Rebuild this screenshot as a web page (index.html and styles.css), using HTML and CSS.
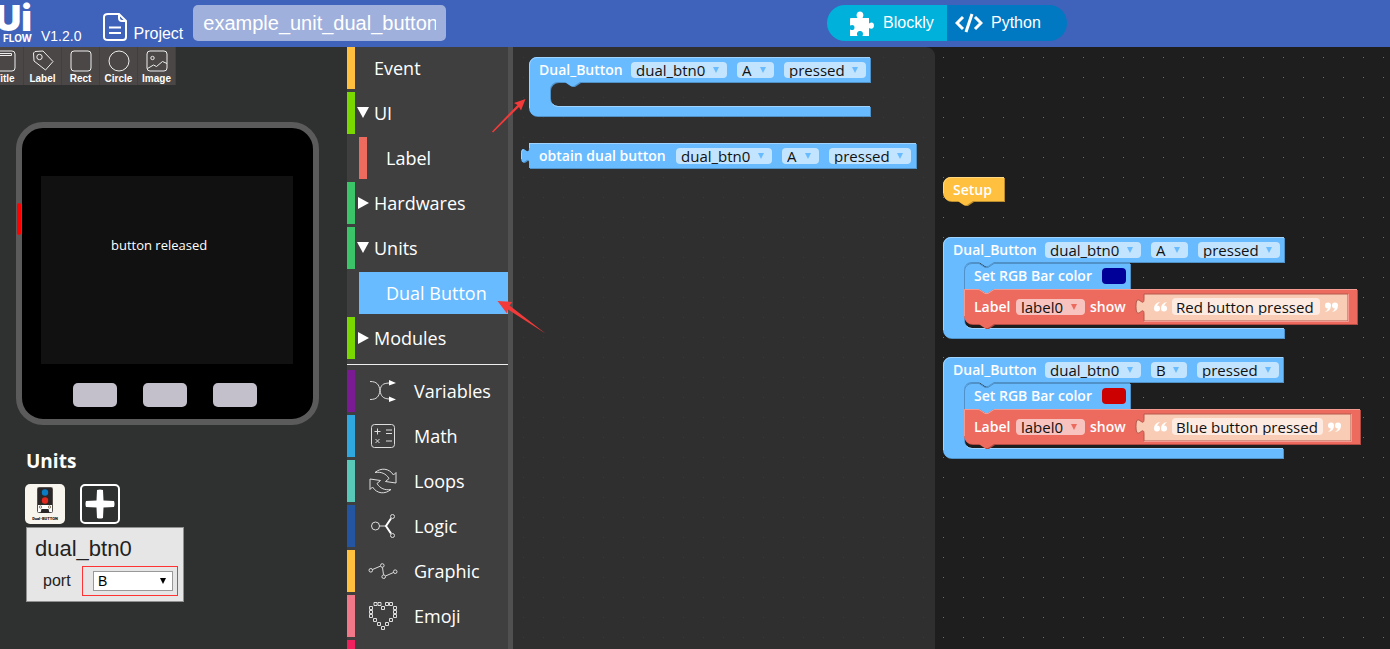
FILE: index.html
```html
<!DOCTYPE html>
<html lang="en">
<head>
<meta charset="utf-8">
<title>UiFlow</title>
<link rel="stylesheet" href="styles.css">
</head>
<body>
<header class="topbar">
  <div class="logo"><span class="logo-main">Ui</span><span class="logo-sub">FLOW</span></div>
  <span class="version">V1.2.0</span>
  <button class="project">
    <svg class="project-icon" viewBox="0 0 24 28"><path d="M5 1h11l7 7v16q0 3-3 3H5q-4 0-4-3V4q0-3 4-3zM16 1v4q0 3 3 3h4M6 14.500h12M6 20h12"/></svg>
    <span>Project</span>
  </button>
  <input class="project-name" aria-label="Project name" value="example_unit_dual_button">
  <div class="mode">
    <button class="mode-btn mode-blockly">
      <svg class="puzzle" viewBox="0 0 25 25"><path d="M2 7h6.500c-2-3-.5-6.500 2.500-6.500s4.500 3.500 2.500 6.500H20v5.500c3-2 5-.5 5 2s-2 4.500-5 2.500V25h-6.500c1.500-3.500-.5-5-2.500-5s-4 1.500-2.500 5H1v-6.500c3 1.500 4.500 0 4.500-2S4 13 1 14.500V8q0-1 1-1z"/></svg>
      Blockly
    </button>
    <button class="mode-btn mode-python">
      <svg class="code" viewBox="0 0 28 22"><path d="M8 5 2 11l6 6M20 5l6 6-6 6M17 2l-6 18"/></svg>
      Python
    </button>
  </div>
</header>

<main class="layout">
  <aside class="side">
    <div class="tools">
      <button class="tool"><svg viewBox="0 0 22 22"><rect x="1" y="1" width="20" height="20" rx="3"/><path d="M3.500 3.500h14v2h-14z"/></svg>Title</button>
      <button class="tool"><svg viewBox="0 0 22 22"><path d="M3 1.500 11 1l10 10.500-7.500 8.500L2 11l-.5-8z"/><circle cx="7.500" cy="7" r="2.700"/></svg>Label</button>
      <button class="tool"><svg viewBox="0 0 22 22"><rect x="1" y="1" width="20" height="20" rx="3"/></svg>Rect</button>
      <button class="tool"><svg viewBox="0 0 22 22"><circle cx="11" cy="11" r="10"/></svg>Circle</button>
      <button class="tool"><svg viewBox="0 0 22 22"><rect x="1" y="1" width="20" height="20" rx="3"/><circle cx="6.500" cy="8" r="1.700"/><path d="m1.500 18.500 6-3.500 3 1.500 6-5 4.500 2"/></svg>Image</button>
    </div>
    <div class="device">
      <span class="device-power"></span>
      <div class="screen"><span class="screen-label">button released</span></div>
      <div class="device-keys">
        <button class="key" aria-label="Key A"></button>
        <button class="key" aria-label="Key B"></button>
        <button class="key" aria-label="Key C"></button>
      </div>
    </div>
    <section class="units">
      <h2 class="units-title">Units</h2>
      <div class="unit-list">
        <button class="unit" aria-label="Dual button unit">
          <svg viewBox="0 0 40 40">
            <rect width="40" height="40" rx="5" fill="#f8f5ee"/>
            <rect x="12.500" y="3.500" width="15" height="25" rx="1" fill="#fff" stroke="#55504c"/>
            <rect x="13" y="4" width="14" height="17" fill="#2b2627"/>
            <circle cx="20" cy="8.500" r="3.200" fill="#0a7cc4"/><circle cx="20" cy="16.500" r="3.200" fill="#e02a20"/>
            <circle cx="15.500" cy="23" r="1.200" fill="none" stroke="#8b7c65"/><circle cx="24.500" cy="23" r="1.200" fill="none" stroke="#8b7c65"/>
            <path d="M16.500 25h7l1 4h-9z" fill="#2b2627"/>
            <text x="20" y="36" class="unit-caption">Dual-BUTTON</text>
          </svg>
        </button>
        <button class="unit" aria-label="Add unit">
          <svg viewBox="0 0 40 40"><rect x="1" y="1" width="38" height="38" rx="4" fill="none" stroke="#fff" stroke-width="2"/><path d="M17 6q3-1 6 0l.5 10.500L34 17q1 3 0 6l-10.500.5L23 34q-3 1-6 0l-.5-10.500L6 23q-1-3 0-6l10.500-.5z" fill="#fff"/></svg>
        </button>
      </div>
      <div class="unit-card">
        <div class="unit-name">dual_btn0</div>
        <div class="port-row">
          <label for="port">port</label>
          <div class="port-frame"><select id="port" class="port"><option>B</option></select></div>
        </div>
      </div>
    </section>
  </aside>

  <nav class="toolbox">
    <button class="cat c-yellow"><span class="caret"></span>Event</button>
    <button class="cat c-lime"><svg class="caret" viewBox="0 0 12 12"><path d="M0 0h12L6 11z"/></svg>UI</button>
    <button class="cat sub c-coral">Label</button>
    <button class="cat c-green"><svg class="caret" viewBox="0 0 12 12"><path d="M1 0v12l11-6z"/></svg>Hardwares</button>
    <button class="cat c-green"><svg class="caret" viewBox="0 0 12 12"><path d="M0 0h12L6 11z"/></svg>Units</button>
    <button class="cat sub selected">Dual Button</button>
    <button class="cat c-lime"><svg class="caret" viewBox="0 0 12 12"><path d="M1 0v12l11-6z"/></svg>Modules</button>
    <hr class="cat-line">
    <button class="cat pic c-purple"><svg viewBox="0 0 30 30"><path d="M2 5.500c7 0 9 3 10 9s3 8 9 8.500M2 23.500c7 0 9-3 10-9s3-7 9-7.500"/><path class="solid" d="m21 4 7 3-7 2.500zM21 20.500l7 3-7 2.500z"/></svg>Variables</button>
    <button class="cat pic c-sky"><svg viewBox="0 0 30 30"><rect x="3.500" y="3.500" width="23" height="23" rx="3"/><path d="M6.500 10.500h6M9.500 7.500v6M18 9h6M18 12.500h6M7.500 18l4 4M11.500 18l-4 4M18 20h6"/></svg>Math</button>
    <button class="cat pic c-teal"><svg viewBox="0 0 30 30"><path d="M7 6.500C13 1.500 21 2 25.500 9L28 6.500V17l-10.500-1.500L21 12.500C18 7.500 13 5.500 7 6.500zM23 23.500C17 28.500 9 28 4.500 21L2 23.500V13l10.500 1.500L9 17.500c3 5 8 7 14 6z"/></svg>Loops</button>
    <button class="cat pic c-navy"><svg viewBox="0 0 30 30"><circle cx="7.500" cy="15" r="4"/><path d="M11.500 15H18"/><path class="thick" d="m23 7.500-5 7.500 5 7.500"/><circle cx="24.500" cy="5.500" r="2"/><circle cx="24.500" cy="24.500" r="2"/></svg>Logic</button>
    <button class="cat pic c-yellow"><svg viewBox="0 0 30 30"><circle cx="2.800" cy="14.300" r="1.800"/><circle cx="14.300" cy="9.500" r="1.800"/><circle cx="15.700" cy="20.700" r="1.800"/><circle cx="27.200" cy="15.700" r="1.800"/><path d="m4.500 13.500 8-3.400M14.500 11.500l1 7.300M17.500 20l8-3.500"/></svg>Graphic</button>
    <button class="cat pic c-pink"><svg viewBox="0 0 30 30"><path d="M6 1.500h3v3H6zM10 1.500h3v3h-3zM13.500 5.500h3v3h-3zM17.500 1.500h3v3h-3zM21.500 1.500h3v3h-3zM25.500 5.500h3v3h-3zM25.500 9.500h3v3h-3zM25.500 13.500h3v3h-3zM21.500 17.500h3v3h-3zM17.500 21.500h3v3h-3zM13.500 25.500h3v3h-3zM9.500 21.500h3v3h-3zM5.500 17.500h3v3h-3zM1.500 13.500h3v3h-3zM1.500 9.500h3v3h-3zM1.500 5.500h3v3h-3z"/></svg>Emoji</button>
    <button class="cat c-crimson" aria-label="More"></button>
  </nav>

  <section class="workspace">
    <div class="flyout"></div>

    <div class="block blue at-event">
      <svg class="shape">
        <path class="dark" transform="translate(1 1)" d="M0 8A8 8 0 0 1 8 0H341V25H51l-6 4h-3l-6-4h-7a8 8 0 0 0-8 8v8a8 8 0 0 0 8 8H341V59H8a8 8 0 0 1-8-8z"/>
        <path class="fill" d="M0 8A8 8 0 0 1 8 0H341V25H51l-6 4h-3l-6-4h-7a8 8 0 0 0-8 8v8a8 8 0 0 0 8 8H341V59H8a8 8 0 0 1-8-8z"/>
        <path class="light" d="M.5 51V8A7.500 7.500 0 0 1 8 .5H341M23.500 47q2 2.500 5.500 2.500H341"/></svg>
      <div class="row"><span class="txt w-event">Dual_Button</span>
        <select class="field w-name" aria-label="Unit"><option>dual_btn0</option></select>
        <select class="field w-key" aria-label="Button"><option>A</option></select>
        <select class="field w-state" aria-label="State"><option>pressed</option></select></div>
    </div>

    <div class="block blue at-value">
      <svg class="shape">
        <path class="dark" transform="translate(1 1)" d="M0 0H387V25H0V20c0-10-8 8-8-7.500S0 15 0 5z"/>
        <path class="fill" d="M0 0H387V25H0V20c0-10-8 8-8-7.500S0 15 0 5z"/>
        <path class="light" d="M0 .5H387M.5 0v5M-7.500 16v-6.500q0-3 2-2.500"/></svg>
      <div class="row"><span class="txt w-obtain">obtain dual button</span>
        <select class="field w-name" aria-label="Unit"><option>dual_btn0</option></select>
        <select class="field w-key" aria-label="Button"><option>A</option></select>
        <select class="field w-state" aria-label="State"><option>pressed</option></select></div>
    </div>

    <div class="block yellow at-setup">
      <svg class="shape">
        <path class="dark" transform="translate(1 1)" d="M0 8A8 8 0 0 1 8 0H61V24H30l-6 4h-3l-6-4H8a8 8 0 0 1-8-8z"/>
        <path class="fill" d="M0 8A8 8 0 0 1 8 0H61V24H30l-6 4h-3l-6-4H8a8 8 0 0 1-8-8z"/>
        <path class="light" d="M.5 16V8A7.500 7.500 0 0 1 8 .5H61"/></svg>
      <div class="row"><span class="txt">Setup</span></div>
    </div>

    <div class="block blue at-a">
      <svg class="shape">
        <path class="dark" transform="translate(1 1)" d="M0 8A8 8 0 0 1 8 0H341V25H51l-6 4h-3l-6-4h-7a8 8 0 0 0-8 8V83a8 8 0 0 0 8 8H341V101H8a8 8 0 0 1-8-8z"/>
        <path class="fill" d="M0 8A8 8 0 0 1 8 0H341V25H51l-6 4h-3l-6-4h-7a8 8 0 0 0-8 8V83a8 8 0 0 0 8 8H341V101H8a8 8 0 0 1-8-8z"/>
        <path class="light" d="M.5 93V8A7.500 7.500 0 0 1 8 .5H341M23.500 89q2 2.500 5.500 2.500H341"/></svg>
      <div class="row"><span class="txt w-event">Dual_Button</span>
        <select class="field w-name" aria-label="Unit"><option>dual_btn0</option></select>
        <select class="field w-key" aria-label="Button"><option>A</option></select>
        <select class="field w-state" aria-label="State"><option>pressed</option></select></div>
      <div class="nest">
        <div class="child blue">
          <svg class="shape">
            <path class="dark" transform="translate(1 1)" d="M0 8A8 8 0 0 1 8 0h7l6 4h3l6-4H166V26H30l-6 4h-3l-6-4H0z"/>
            <path class="fill" d="M0 8A8 8 0 0 1 8 0h7l6 4h3l6-4H166V26H30l-6 4h-3l-6-4H0z"/>
            <path class="edge" d="M.5 26V8A7.500 7.500 0 0 1 8 .5h7l6 4h3l6-4H166"/></svg>
          <div class="row"><span class="txt w-rgb">Set RGB Bar color</span><button class="swatch navy" aria-label="Color navy"></button></div>
        </div>
        <div class="child red">
          <svg class="shape">
            <path class="dark" transform="translate(1 1)" d="M0 0h15l6 4h3l6-4H393V35H30l-6 4h-3l-6-4H8a8 8 0 0 1-8-8z"/>
            <path class="fill" d="M0 0h15l6 4h3l6-4H393V35H30l-6 4h-3l-6-4H8a8 8 0 0 1-8-8z"/>
            <path class="light" d="M.5 27V.5H15l6 4h3l6-4H393"/>
            <path class="peach" d="M180 5H384V32H180V25c0-10-8 8-8-7.500s8 2.500 8-7.500z"/>
            <path class="peach-light" d="M180 32.500H384.500V5"/></svg>
          <div class="row tall"><span class="txt w-label">Label</span>
            <select class="field w-lbl" aria-label="Label"><option>label0</option></select>
            <span class="txt w-show">show</span>
            <svg class="quote" viewBox="0 0 14 10"><path d="M6 0Q0 1 0 6.500a3 3 0 1 0 3-3Q4 1.500 6 0zM13 0Q7 1 7 6.500a3 3 0 1 0 3-3Q11 1.500 13 0z"/></svg>
            <input class="text w-red" aria-label="Text" value="Red button pressed">
            <svg class="quote" viewBox="0 0 14 10"><path d="M1 10Q7 9 7 3.500a3 3 0 1 0-3 3Q3 8.500 1 10zM8 10q6-1 6-6.500a3 3 0 1 0-3 3Q10 8.500 8 10z"/></svg></div>
        </div>
      </div>
    </div>

    <div class="block blue at-b">
      <svg class="shape">
        <path class="dark" transform="translate(1 1)" d="M0 8A8 8 0 0 1 8 0H340V25H51l-6 4h-3l-6-4h-7a8 8 0 0 0-8 8V83a8 8 0 0 0 8 8H340V101H8a8 8 0 0 1-8-8z"/>
        <path class="fill" d="M0 8A8 8 0 0 1 8 0H340V25H51l-6 4h-3l-6-4h-7a8 8 0 0 0-8 8V83a8 8 0 0 0 8 8H340V101H8a8 8 0 0 1-8-8z"/>
        <path class="light" d="M.5 93V8A7.500 7.500 0 0 1 8 .5H340M23.500 89q2 2.500 5.500 2.500H340"/></svg>
      <div class="row"><span class="txt w-event">Dual_Button</span>
        <select class="field w-name" aria-label="Unit"><option>dual_btn0</option></select>
        <select class="field w-key-b" aria-label="Button"><option>B</option></select>
        <select class="field w-state" aria-label="State"><option>pressed</option></select></div>
      <div class="nest">
        <div class="child blue">
          <svg class="shape">
            <path class="dark" transform="translate(1 1)" d="M0 8A8 8 0 0 1 8 0h7l6 4h3l6-4H166V26H30l-6 4h-3l-6-4H0z"/>
            <path class="fill" d="M0 8A8 8 0 0 1 8 0h7l6 4h3l6-4H166V26H30l-6 4h-3l-6-4H0z"/>
            <path class="edge" d="M.5 26V8A7.500 7.500 0 0 1 8 .5h7l6 4h3l6-4H166"/></svg>
          <div class="row"><span class="txt w-rgb">Set RGB Bar color</span><button class="swatch crimson" aria-label="Color red"></button></div>
        </div>
        <div class="child red">
          <svg class="shape">
            <path class="dark" transform="translate(1 1)" d="M0 0h15l6 4h3l6-4H396V35H30l-6 4h-3l-6-4H8a8 8 0 0 1-8-8z"/>
            <path class="fill" d="M0 0h15l6 4h3l6-4H396V35H30l-6 4h-3l-6-4H8a8 8 0 0 1-8-8z"/>
            <path class="light" d="M.5 27V.5H15l6 4h3l6-4H396"/>
            <path class="peach" d="M180 5H387V32H180V25c0-10-8 8-8-7.500s8 2.500 8-7.500z"/>
            <path class="peach-light" d="M180 32.500H387.500V5"/></svg>
          <div class="row tall"><span class="txt w-label">Label</span>
            <select class="field w-lbl" aria-label="Label"><option>label0</option></select>
            <span class="txt w-show">show</span>
            <svg class="quote" viewBox="0 0 14 10"><path d="M6 0Q0 1 0 6.500a3 3 0 1 0 3-3Q4 1.500 6 0zM13 0Q7 1 7 6.500a3 3 0 1 0 3-3Q11 1.500 13 0z"/></svg>
            <input class="text w-blue" aria-label="Text" value="Blue button pressed">
            <svg class="quote" viewBox="0 0 14 10"><path d="M1 10Q7 9 7 3.500a3 3 0 1 0-3 3Q3 8.500 1 10zM8 10q6-1 6-6.500a3 3 0 1 0-3 3Q10 8.500 8 10z"/></svg></div>
        </div>
      </div>
    </div>
  </section>

  <svg class="arrows" viewBox="0 0 100 300">
    <path d="M12 84.500 37.500 58 34 56l11.500-4L41 63.500l-2-3.500L13 85.500z"/>
    <path d="M65.500 286.500 28 262.500l-1 4L17.500 254l15 1-3 3.500z"/>
  </svg>
</main>
</body>
</html>
```

FILE: styles.css
```css
* { box-sizing: border-box; }
body {
  margin: 0;
  height: 100vh;
  display: flex;
  flex-direction: column;
  overflow: hidden;
  background: #1e1e1e;
  font-family: "Open Sans", "Noto Sans", sans-serif;
}
button, input, select { font: inherit; color: inherit; margin: 0; padding: 0; border: 0; background: none; }
svg { display: block; flex: none; }

/* top bar */
.topbar {
  flex: none;
  height: 47px;
  display: flex;
  align-items: flex-start;
  padding-top: 5px;
  background: #3f62ba;
  color: #fff;
  font-family: "Liberation Sans", Arial, sans-serif;
  font-size: 16px;
}
.logo { width: 32px; display: flex; flex-direction: column; align-items: flex-end; font-family: Inter, sans-serif; font-weight: 900; }
.logo-main { font-size: 36px; line-height: 26px; }
.logo-sub { margin-top: 2px; font-size: 10px; line-height: 10px; font-weight: 700; }
.version { margin-left: 9px; font-size: 14px; line-height: 16px; padding-top: 23px; }
.project { display: flex; align-items: flex-end; gap: 6px; margin-left: 22px; padding-top: 8px; }
.project-icon { width: 24px; height: 28px; fill: none; stroke: #fff; stroke-width: 2; }
.project span { line-height: 14px; }
.project-name { width: 253px; height: 36px; margin-left: 10px; padding: 0 10px; border-radius: 5px; background: #9fb0dc; font-size: 20px; }
.mode { display: flex; height: 36px; margin-left: auto; margin-right: 323px; border-radius: 18px; overflow: hidden; }
.mode-btn { width: 120px; display: flex; align-items: center; gap: 8px; }
.mode-blockly { background: #00b1dc; padding-left: 22px; gap: 9px; }
.mode-python { background: #0079c2; padding-left: 8px; }
.puzzle { width: 25px; height: 25px; fill: #fff; }
.code { width: 28px; height: 22px; fill: none; stroke: #fff; stroke-width: 3; }

.layout { flex: 1; min-height: 0; display: flex; position: relative; }

/* left panel */
.side { flex: none; width: 347px; background: #2f3130; overflow: hidden; color: #fff; }
.tools { display: flex; width: 176px; height: 38px; justify-content: flex-end; background: #4b4746; overflow: hidden; }
.tool { flex: none; width: 38px; display: flex; flex-direction: column; align-items: center; gap: 1px; padding-top: 3px; border-right: 1px solid #443f3e; font: bold 10px/11px "Liberation Sans", Arial, sans-serif; }
.tool svg { width: 22px; height: 22px; fill: none; stroke: #eee; stroke-width: 1; }
.device { position: relative; width: 303px; margin: 37px 0 0 16px; padding: 48px 20px 12px 19px; border: 6px solid #5b5b5b; border-radius: 27px; background: #000; }
.device-power { position: absolute; left: -5px; top: 75px; width: 4px; height: 32px; border-radius: 2px; background: #f00; }
.screen { position: relative; height: 188px; background: #111; }
.screen-label { position: absolute; left: 70px; top: 60px; font-size: 13px; line-height: 18px; }
.device-keys { display: flex; justify-content: center; gap: 26px; margin-top: 19px; padding-right: 5px; }
.key { width: 44px; height: 24px; border-radius: 5px; background: #c3bfcb; }
.units { padding: 23px 0 0 26px; }
.units-title { margin: 0; font-size: 19px; line-height: 26px; }
.unit-list { display: flex; gap: 15px; margin: 10px 0 3px -1px; }
.unit { width: 40px; height: 40px; }
.unit-caption { font: 900 4px Roboto, sans-serif; text-anchor: middle; fill: #111; }
.unit-card { width: 158px; padding: 8px 5px 5px 8px; border: 1px solid #909090; background: #e6e6e6; color: #222; font-family: "Liberation Sans", Arial, sans-serif; }
.unit-name { font-size: 22px; line-height: 26px; }
.port-row { display: flex; align-items: center; justify-content: space-between; padding-left: 8px; margin-top: 4px; font-size: 16px; }
.port-frame { width: 96px; height: 30px; padding: 4px 4px 4px 10px; border: 1px solid #f33; }
.port { appearance: none; display: block; width: 80px; height: 20px; padding-left: 4px; border: 1px solid #999; font-size: 14px; color: #000; background: #fff url("data:image/svg+xml,%3Csvg xmlns='http://www.w3.org/2000/svg' width='6' height='6'%3E%3Cpath d='M0 0h6L3 6z'/%3E%3C/svg%3E") no-repeat right 6px center; }

/* category list */
.toolbox { flex: none; width: 166px; display: flex; flex-direction: column; gap: 3px; overflow: hidden; background: #3f3f3f; border-right: 5px solid #505050; font-size: 18px; }
.cat { flex: none; height: 42px; display: flex; align-items: center; gap: 5px; padding-left: 2px; border-left: 8px solid; color: #fff; }
.sub { margin-left: 12px; padding-left: 19px; }
.selected { background: #69bbff; border-left-color: #69bbff; }
.caret { width: 12px; height: 12px; fill: #fff; }
.cat-line { flex: none; width: 100%; height: 1px; margin: 2px 0; border: 0; background: #eee; }
.pic { padding-left: 13px; gap: 16px; }
.pic svg { width: 30px; height: 30px; fill: none; stroke: #ddd; stroke-width: 1; }
.pic .solid { fill: #fff; stroke: none; }
.pic .thick { stroke-width: 2; stroke: #fff; }
.c-yellow { border-left-color: #ffc03f; }
.c-lime { border-left-color: #7ad800; }
.c-coral { border-left-color: #ed6a5e; }
.c-green { border-left-color: #3bc568; }
.c-purple { border-left-color: #7a1b94; }
.c-sky { border-left-color: #2fa8e0; }
.c-teal { border-left-color: #5ac8b8; }
.c-navy { border-left-color: #2355a0; }
.c-pink { border-left-color: #f07888; }
.c-crimson { border-left-color: #f0205e; }

/* canvas */
.workspace { position: relative; flex: 1; min-width: 0; overflow: hidden; background: #1e1e1e url("data:image/svg+xml,%3Csvg xmlns='http://www.w3.org/2000/svg' width='20' height='20'%3E%3Cpath d='M10 10h1v1h-1z' fill='%23707070'/%3E%3C/svg%3E"); }
.flyout { width: 422px; height: 100%; border-radius: 0 9px 0 0; background: rgba(50, 50, 50, 0.87); }
.block { position: absolute; font-size: 14px; }
.at-event { left: 16px; top: 10px; }
.at-value { left: 16px; top: 96px; }
.at-setup { left: 430px; top: 130px; }
.at-a { left: 430px; top: 190px; }
.at-b { left: 430px; top: 310px; }
.blue { --fill: #69bbff; --light: #a0d4ff; --dark: #5091c8; --arrow: url("data:image/svg+xml,%3Csvg xmlns='http://www.w3.org/2000/svg' width='6' height='6'%3E%3Cpath d='M0 0h6L3 6z' fill='%2369bbff'/%3E%3C/svg%3E"); --field: #c3e4ff; }
.red { --fill: #ed6a5e; --light: #f39b93; --dark: #b04a42; --arrow: url("data:image/svg+xml,%3Csvg xmlns='http://www.w3.org/2000/svg' width='6' height='6'%3E%3Cpath d='M0 0h6L3 6z' fill='%23ed6a5e'/%3E%3C/svg%3E"); --field: #f8c3bf; }
.yellow { --fill: #ffc03f; --light: #ffd884; --dark: #b98c2e; }
.shape { position: absolute; left: 0; top: 0; width: 1px; height: 1px; overflow: visible; }
.fill { fill: var(--fill); }
.dark { fill: var(--dark); }
.light { fill: none; stroke: var(--light); }
.edge { fill: none; stroke: var(--dark); }
.peach { fill: #f9cdb5; stroke: #b5584c; }
.peach-light { fill: none; stroke: #f39b93; }
.row { position: relative; display: flex; align-items: center; height: 26px; padding-left: 10px; white-space: nowrap; }
.txt { flex: none; margin-right: 5px; color: #fff; font-weight: 600; line-height: 20px; }
.w-event { width: 87px; }
.w-obtain { width: 132px; }
.w-rgb { width: 123px; }
.w-label { width: 37px; }
.w-show { width: 59px; }
.field { appearance: none; flex: none; height: 16px; margin-right: 10px; padding-left: 5px; border-radius: 4px; font-size: 15px; line-height: 16px; color: #111; background: var(--field) var(--arrow) no-repeat right 8px center; }
.w-name { width: 96px; }
.w-key { width: 37px; }
.w-key-b { width: 36px; }
.w-state { width: 82px; }
.w-lbl { width: 69px; margin-right: 5px; }
.nest { padding-left: 21px; }
.child { position: relative; }
.tall { height: 35px; }
.swatch { width: 24px; height: 16px; border-radius: 4px; }
.navy { background: #009; }
.crimson { background: #c00; }
.quote { width: 14px; height: 10px; fill: #fff; }
.text { flex: none; height: 17px; margin: 0 4px; padding: 0 4px; border-radius: 4px; background: #fdebe2; color: #111; font-size: 15px; }
.w-red { width: 148px; }
.w-blue { width: 151px; }

.arrows { position: absolute; left: 480px; top: 0; width: 100px; height: 300px; fill: #f33a3a; pointer-events: none; }
```
